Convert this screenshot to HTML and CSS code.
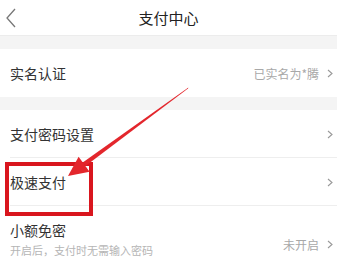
FILE: index.html
```html
<!DOCTYPE html>
<html lang="zh">
<head>
<meta charset="utf-8">
<link rel="stylesheet" href="styles.css">
</head>
<body>
<div class="page">
  <header class="header">
    <svg class="back" width="10" height="20" viewBox="0 0 10 20"><polyline points="9,1 1,10 9,19" fill="none" stroke="#777" stroke-width="1.3"/></svg>
    <div class="title">支付中心</div>
  </header>
  <div class="band"></div>
  <div class="row">
    <span class="label">实名认证</span>
    <span class="right"><span class="value">已实名为*腾</span><svg class="chev" width="6" height="9" viewBox="0 0 6 9"><polyline points="1,1 5,4.5 1,8" fill="none" stroke="#999" stroke-width="1.1"/></svg></span>
  </div>
  <div class="band"></div>
  <div class="row line">
    <span class="label">支付密码设置</span>
    <span class="right"><svg class="chev" width="6" height="9" viewBox="0 0 6 9"><polyline points="1,1 5,4.5 1,8" fill="none" stroke="#999" stroke-width="1.1"/></svg></span>
  </div>
  <div class="row line">
    <span class="label">极速支付</span>
    <span class="right"><svg class="chev" width="6" height="9" viewBox="0 0 6 9"><polyline points="1,1 5,4.5 1,8" fill="none" stroke="#999" stroke-width="1.1"/></svg></span>
  </div>
  <div class="row tall">
    <div class="stack">
      <span class="label">小额免密</span>
      <span class="sub">开启后，支付时无需输入密码</span>
    </div>
    <span class="right"><span class="value">未开启</span><svg class="chev" width="6" height="9" viewBox="0 0 6 9"><polyline points="1,1 5,4.5 1,8" fill="none" stroke="#999" stroke-width="1.1"/></svg></span>
  </div>
</div>
<div class="markbox"></div>
<svg class="arrow" width="350" height="260" viewBox="0 0 350 260">
  <polygon points="188.4,87.6 188,88.4 85.5,165.9 82.7,162.5" fill="#e3262c"/>
  <polygon points="68,176 78.6,156.7 89.6,171.7" fill="#e3262c"/>
</svg>
</body>
</html>
```
FILE: styles.css
```css
html, body {
  margin: 0;
  padding: 0;
  background: #fff;
  width: 350px;
  height: 260px;
  overflow: hidden;
}
body {
  position: relative;
  font-family: "Noto Sans CJK SC", "Noto Sans", sans-serif;
  color: #333;
}
.page {
  width: 337px;
}
.header {
  height: 36px;
  display: flex;
  align-items: center;
  justify-content: center;
  position: relative;
  border-bottom: 1px solid #ececec;
  box-sizing: border-box;
}
.back {
  position: absolute;
  left: 6px;
  top: 8px;
}
.title {
  font-size: 15px;
  color: #222;
}
.band {
  height: 13px;
  background: #f4f4f4;
}
.row {
  height: 48px;
  display: flex;
  align-items: center;
  justify-content: space-between;
  padding: 0 4px 0 10px;
  box-sizing: border-box;
  position: relative;
}
.row.line::after {
  content: "";
  position: absolute;
  left: 10px;
  right: 0;
  bottom: 0;
  height: 1px;
  background: #eeeeee;
}
.row.tall {
  height: 60px;
  align-items: flex-start;
  padding-top: 14px;
}
.row.tall .right {
  margin-top: 16px;
}
.label {
  font-size: 14px;
  color: #333;
}
.stack {
  display: flex;
  flex-direction: column;
  gap: 2px;
}
.sub {
  font-size: 11px;
  color: #b5b5b5;
}
.right {
  display: flex;
  align-items: center;
  gap: 8px;
}
.value {
  font-size: 12px;
  color: #a8a8a8;
}
.markbox {
  position: absolute;
  left: 5px;
  top: 162px;
  width: 88px;
  height: 54px;
  border: 4px solid #d9161e;
  box-sizing: border-box;
}
.arrow {
  position: absolute;
  left: 0;
  top: 0;
}
```
